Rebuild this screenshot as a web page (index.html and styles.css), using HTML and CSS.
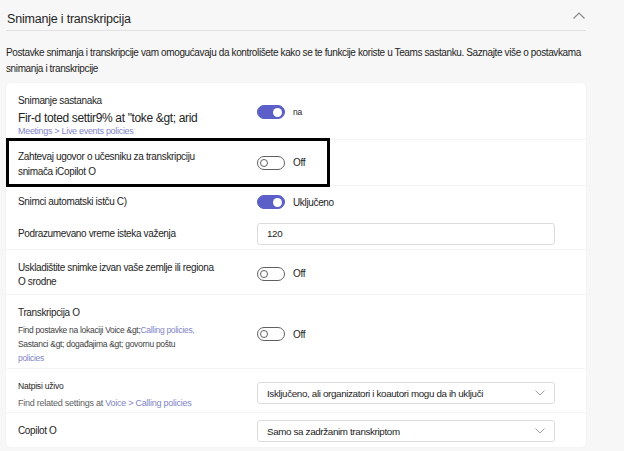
FILE: index.html
```html
<!DOCTYPE html>
<html lang="sr">
<head>
<meta charset="utf-8">
<title>Snimanje i transkripcija</title>
<link rel="stylesheet" href="styles.css">
</head>
<body>
<section class="section">
  <header class="header">
    <h2 class="title">Snimanje i transkripcija</h2>
    <svg class="chevron" width="12" height="7" viewBox="0 0 12 7"><path d="M0.5 6.5 L6 1 L11.5 6.5" fill="none" stroke="#8a8a8a" stroke-width="1.2"/></svg>
  </header>
  <p class="desc">Postavke snimanja i transkripcije vam omogućavaju da kontrolišete kako se te funkcije koriste u Teams sastanku. Saznajte više o postavkama<br>snimanja i transkripcije</p>
  <div class="card">
    <div class="row row-1">
      <div class="label">
        <div class="name">Snimanje sastanaka</div>
        <div class="big">Fir-d toted settir9% at "toke &amp;gt; arid</div>
        <div class="link small-link">Meetings &gt; Live events policies</div>
      </div>
      <div class="control"><span class="toggle on"></span><span class="state small">na</span></div>
    </div>
    <div class="row row-2">
      <div class="label">
        <div class="name two">Zahtevaj ugovor o učesniku za transkripciju<br>snimača iCopilot O</div>
      </div>
      <div class="control"><span class="toggle"></span><span class="state">Off</span></div>
      <div class="highlight"></div>
    </div>
    <div class="row row-3 no-line">
      <div class="label"><div class="name">Snimci automatski istču C)</div></div>
      <div class="control"><span class="toggle on"></span><span class="state">Uključeno</span></div>
    </div>
    <div class="row row-4">
      <div class="label"><div class="name">Podrazumevano vreme isteka važenja</div></div>
      <div class="control"><div class="input">120</div></div>
    </div>
    <div class="row row-5">
      <div class="label"><div class="name two-tight">Uskladištite snimke izvan vaše zemlje ili regiona<br>O srodne</div></div>
      <div class="control"><span class="toggle"></span><span class="state">Off</span></div>
    </div>
    <div class="row row-6">
      <div class="label">
        <div class="name">Transkripcija O</div>
        <div class="sub">Find postavke na lokaciji Voice &amp;gt;<span class="link">Calling policies,</span><br>Sastanci &amp;gt; događajima &amp;gt; govornu poštu<br><span class="link">policies</span></div>
      </div>
      <div class="control"><span class="toggle"></span><span class="state">Off</span></div>
    </div>
    <div class="row row-7">
      <div class="label">
        <div class="name tiny">Natpisi uživo</div>
        <div class="sub2">Find related settings at <span class="link">Voice &gt; Calling policies</span></div>
      </div>
      <div class="control"><div class="input select">Isključeno, ali organizatori i koautori mogu da ih uključi<svg class="caret" width="10" height="6" viewBox="0 0 10 6"><path d="M0.5 0.5 L5 5 L9.5 0.5" fill="none" stroke="#a0a0a0" stroke-width="1"/></svg></div></div>
    </div>
    <div class="row row-8">
      <div class="label"><div class="name">Copilot O</div></div>
      <div class="control"><div class="input select">Samo sa zadržanim transkriptom<svg class="caret" width="10" height="6" viewBox="0 0 10 6"><path d="M0.5 0.5 L5 5 L9.5 0.5" fill="none" stroke="#a0a0a0" stroke-width="1"/></svg></div></div>
    </div>
  </div>
</section>
</body>
</html>
```
FILE: styles.css
```css
html, body {
  margin: 0;
  padding: 0;
}
body {
  background: #f7f7f7;
  font-family: "Liberation Sans", Arial, sans-serif;
  color: #242424;
  width: 624px;
  height: 451px;
  overflow: hidden;
}
.section {
  margin-left: 6px;
  width: 580px;
}
.header {
  height: 31px;
  border-bottom: 1px solid #e1e1e1;
  display: flex;
  align-items: center;
  justify-content: space-between;
  box-sizing: border-box;
}
.title {
  margin: 0 0 0 1px;
  padding-top: 8px;
  font-size: 12.5px;
  font-weight: normal;
  color: #242424;
  letter-spacing: -0.2px;
}
.chevron {
  margin-right: 1px;
  margin-top: 1px;
}
.desc {
  margin: 14px 0 0 0;
  font-size: 10px;
  line-height: 16px;
  letter-spacing: -0.38px;
  color: #242424;
  white-space: nowrap;
}
.card {
  margin-top: 6px;
  background: #ffffff;
  border-radius: 4px;
  height: 364px;
  box-shadow: 0 0 1px rgba(0, 0, 0, 0.12);
}
.row {
  position: relative;
  display: grid;
  grid-template-columns: 239px 1fr;
  align-items: center;
  border-bottom: 1px solid #f3f3f3;
  padding-left: 12px;
  box-sizing: content-box;
}
.row.no-line { border-bottom: none; }
.row-1 { height: 56px; align-items: start; }
.row-2 { height: 45px; }
.row-3 { height: 32px; }
.row-4 { height: 31px; }
.row-5 { height: 41px; padding-top: 3px; }
.row-6 { height: 70px; padding-top: 3px; }
.row-7 { height: 43px; }
.row-8 { height: 30px; padding-top: 3px; border-bottom: none; }
.name {
  font-size: 10px;
  line-height: 16px;
  letter-spacing: -0.35px;
}
.name.two { line-height: 15px; padding-top: 2px; }
.name.two-tight { line-height: 14px; padding-top: 3px; }
.name.tiny {
  font-size: 8.5px;
  line-height: 14px;
  letter-spacing: -0.2px;
}
.row-1 .label { padding-top: 11px; }
.row-1 .name { line-height: 14px; }
.row-1 .control { padding-top: 22px; }
.big {
  font-size: 12px;
  line-height: 14px;
  letter-spacing: -0.35px;
  margin-top: 3px;
}
.link {
  color: #7f85c9;
}
.small-link {
  font-size: 9px;
  line-height: 11px;
  letter-spacing: -0.3px;
  margin-top: 1px;
}
.row-6 { align-items: start; }
.row-6 .label { padding-top: 7px; }
.row-6 .control { padding-top: 29px; }
.sub {
  font-size: 8.5px;
  line-height: 14px;
  letter-spacing: -0.3px;
  color: #424242;
  margin-top: 2px;
}
.row-7 { align-items: start; }
.row-7 .label { padding-top: 10px; }
.row-7 .control { padding-top: 13px; }
.sub2 {
  font-size: 9px;
  line-height: 14px;
  letter-spacing: -0.25px;
  color: #616161;
  margin-top: 3px;
}
.control {
  display: flex;
  align-items: center;
}
.toggle {
  position: relative;
  display: inline-block;
  box-sizing: border-box;
  width: 28px;
  height: 14px;
  border-radius: 7px;
  border: 1px solid #616161;
  background: #fff;
  flex: none;
}
.toggle::after {
  content: "";
  position: absolute;
  top: 2px;
  left: 2px;
  width: 8px;
  height: 8px;
  border-radius: 50%;
  box-sizing: border-box;
  border: 1px solid #616161;
  background: #fff;
}
.toggle.on {
  background: #5b5fc7;
  border-color: #5b5fc7;
}
.toggle.on::after {
  left: 15px;
  top: 1.5px;
  width: 9px;
  height: 9px;
  border: none;
}
.state {
  margin-left: 8px;
  font-size: 10px;
  letter-spacing: -0.35px;
  color: #242424;
}
.state.small { font-size: 8.5px; }
.input {
  box-sizing: border-box;
  width: 298px;
  height: 22px;
  border: 1px solid #dcdcdc;
  border-radius: 3px;
  padding: 0 9px;
  display: flex;
  align-items: center;
  justify-content: space-between;
  font-size: 9.8px;
  color: #242424;
  letter-spacing: -0.35px;
}
.caret { margin-right: 0; }
.highlight {
  position: absolute;
  left: 0;
  top: -2px;
  width: 324px;
  height: 49px;
  box-sizing: border-box;
  border: 3px solid #000;
}
```
